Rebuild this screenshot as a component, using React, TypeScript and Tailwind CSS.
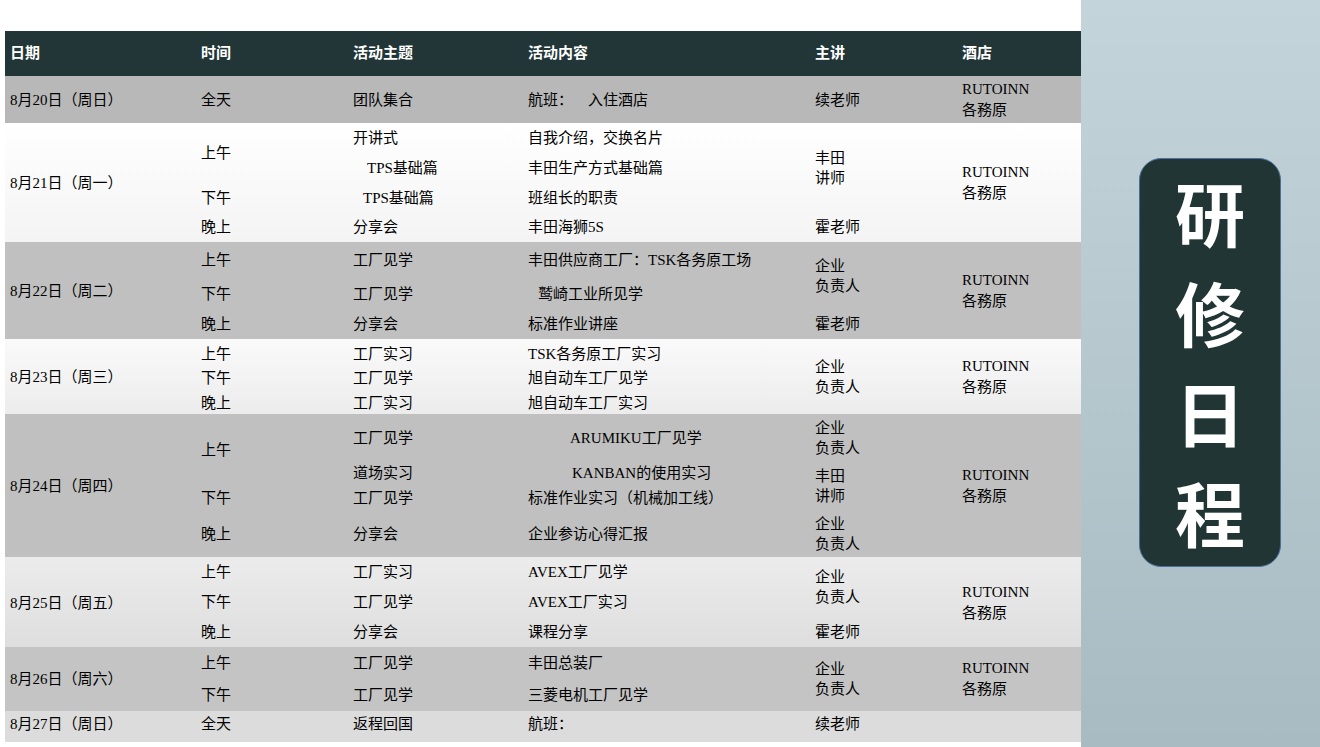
import React from "react";

type L = [number, string, number?];
type Row = { top: number; h: number; bg: string; cols: L[][] };

const rows: Row[] = [
  { top: 76, h: 47, bg: "bg-[#b8b8b8]", cols: [[[100, "8月20日（周日）"]], [[100, "全天"]], [[100, "团队集合"]], [[100, "航班：    入住酒店"]], [[100, "续老师"]], [[89, "RUTOINN"], [110, "各務原"]]] },
  { top: 123, h: 119, bg: "bg-gradient-to-b from-[#ffffff] to-[#f4f4f4]", cols: [[[183, "8月21日（周一）"]], [[153, "上午"], [198, "下午"], [227, "晚上"]], [[138, "开讲式"], [168, "TPS基础篇", 14], [198, "TPS基础篇", 10], [227, "分享会"]], [[138, "自我介绍，交换名片"], [168, "丰田生产方式基础篇"], [198, "班组长的职责"], [227, "丰田海狮5S"]], [[158, "丰田"], [178, "讲师"], [227, "霍老师"]], [[172, "RUTOINN"], [193, "各務原"]]] },
  { top: 242, h: 97, bg: "bg-[#c0c0c0]", cols: [[[291, "8月22日（周二）"]], [[260, "上午"], [294, "下午"], [324, "晚上"]], [[260, "工厂见学"], [294, "工厂见学"], [324, "分享会"]], [[260, "丰田供应商工厂：TSK各务原工场"], [294, "鹫崎工业所见学", 10], [324, "标准作业讲座"]], [[266, "企业"], [286, "负责人"], [324, "霍老师"]], [[280, "RUTOINN"], [301, "各務原"]]] },
  { top: 339, h: 75, bg: "bg-gradient-to-b from-[#fafafa] to-[#ececec]", cols: [[[377, "8月23日（周三）"]], [[354, "上午"], [378, "下午"], [403, "晚上"]], [[354, "工厂实习"], [378, "工厂见学"], [403, "工厂实习"]], [[354, "TSK各务原工厂实习"], [378, "旭自动车工厂见学"], [403, "旭自动车工厂实习"]], [[367, "企业"], [387, "负责人"]], [[366, "RUTOINN"], [387, "各務原"]]] },
  { top: 414, h: 143, bg: "bg-[#c0c0c0]", cols: [[[486, "8月24日（周四）"]], [[450, "上午"], [498, "下午"], [534, "晚上"]], [[438, "工厂见学"], [473, "道场实习"], [498, "工厂见学"], [534, "分享会"]], [[438, "ARUMIKU工厂见学", 42], [473, "KANBAN的使用实习", 44], [498, "标准作业实习（机械加工线）"], [534, "企业参访心得汇报"]], [[428, "企业"], [448, "负责人"], [476, "丰田"], [496, "讲师"], [524, "企业"], [544, "负责人"]], [[475, "RUTOINN"], [496, "各務原"]]] },
  { top: 557, h: 90, bg: "bg-gradient-to-b from-[#ececec] to-[#dedede]", cols: [[[603, "8月25日（周五）"]], [[572, "上午"], [602, "下午"], [632, "晚上"]], [[572, "工厂实习"], [602, "工厂见学"], [632, "分享会"]], [[572, "AVEX工厂见学"], [602, "AVEX工厂实习"], [632, "课程分享"]], [[577, "企业"], [597, "负责人"], [632, "霍老师"]], [[592, "RUTOINN"], [613, "各務原"]]] },
  { top: 647, h: 64, bg: "bg-[#c4c4c4]", cols: [[[679, "8月26日（周六）"]], [[663, "上午"], [695, "下午"]], [[663, "工厂见学"], [695, "工厂见学"]], [[663, "丰田总装厂"], [695, "三菱电机工厂见学"]], [[669, "企业"], [689, "负责人"]], [[668, "RUTOINN"], [689, "各務原"]]] },
  { top: 711, h: 31, bg: "bg-[#dcdcdc]", cols: [[[724, "8月27日（周日）"]], [[724, "全天"]], [[724, "返程回国"]], [[724, "航班："]], [[724, "续老师"]], []] },
];

const widths = ["w-[191px] pl-[5px]", "w-[152px] pl-[5px]", "w-[175px] pl-[5px]", "w-[287px] pl-[5px]", "w-[147px] pl-[5px]", "w-[124px] pl-[5px]"];
const heads = ["日期", "时间", "活动主题", "活动内容", "主讲", "酒店"];
const font = { fontFamily: '"Liberation Serif","Noto Sans CJK SC",serif' };

function Cell({ lines, top, cls }: { lines: L[]; top: number; cls: string }) {
  let prev = top;
  return (
    <div className={`${cls} flex flex-col`}>
      {lines.map(([y, t, x], i) => {
        const mt = y - 10 - prev;
        prev = y + 10;
        return (
          <div key={i} className="h-[20px] leading-[20px] whitespace-pre text-[15px] text-black" style={{ marginTop: mt, paddingLeft: x || 0 }}>
            {t}
          </div>
        );
      })}
    </div>
  );
}

export default function App() {
  return (
    <div className="w-[1320px] h-[747px] flex bg-white overflow-hidden" style={font}>
      <div className="w-[1081px] flex flex-col pt-[31px] pl-[5px]">
        <div className="h-[45px] bg-[#233637] flex items-center">
          {heads.map((h, i) => (
            <div key={i} className={`${widths[i]} text-white font-bold text-[15px]`}>{h}</div>
          ))}
        </div>
        {rows.map((r, ri) => (
          <div key={ri} className={`flex ${r.bg}`} style={{ height: r.h }}>
            {r.cols.map((c, ci) => (
              <Cell key={ci} lines={c} top={r.top} cls={widths[ci]} />
            ))}
          </div>
        ))}
      </div>
      <div className="flex-1 bg-gradient-to-b from-[#c3d5da] to-[#a8bbc2] pl-[58px] pt-[158px]">
        <div className="w-[142px] h-[409px] bg-[#223535] border border-[#4a6f9a] rounded-[22px] flex flex-col items-center pt-[10px] gap-[14px]">
          {["研", "修", "日", "程"].map((c) => (
            <div key={c} className="text-white text-[70px] leading-[86px] font-bold" style={{ fontFamily: '"Noto Sans CJK SC",sans-serif' }}>{c}</div>
          ))}
        </div>
      </div>
    </div>
  );
}
